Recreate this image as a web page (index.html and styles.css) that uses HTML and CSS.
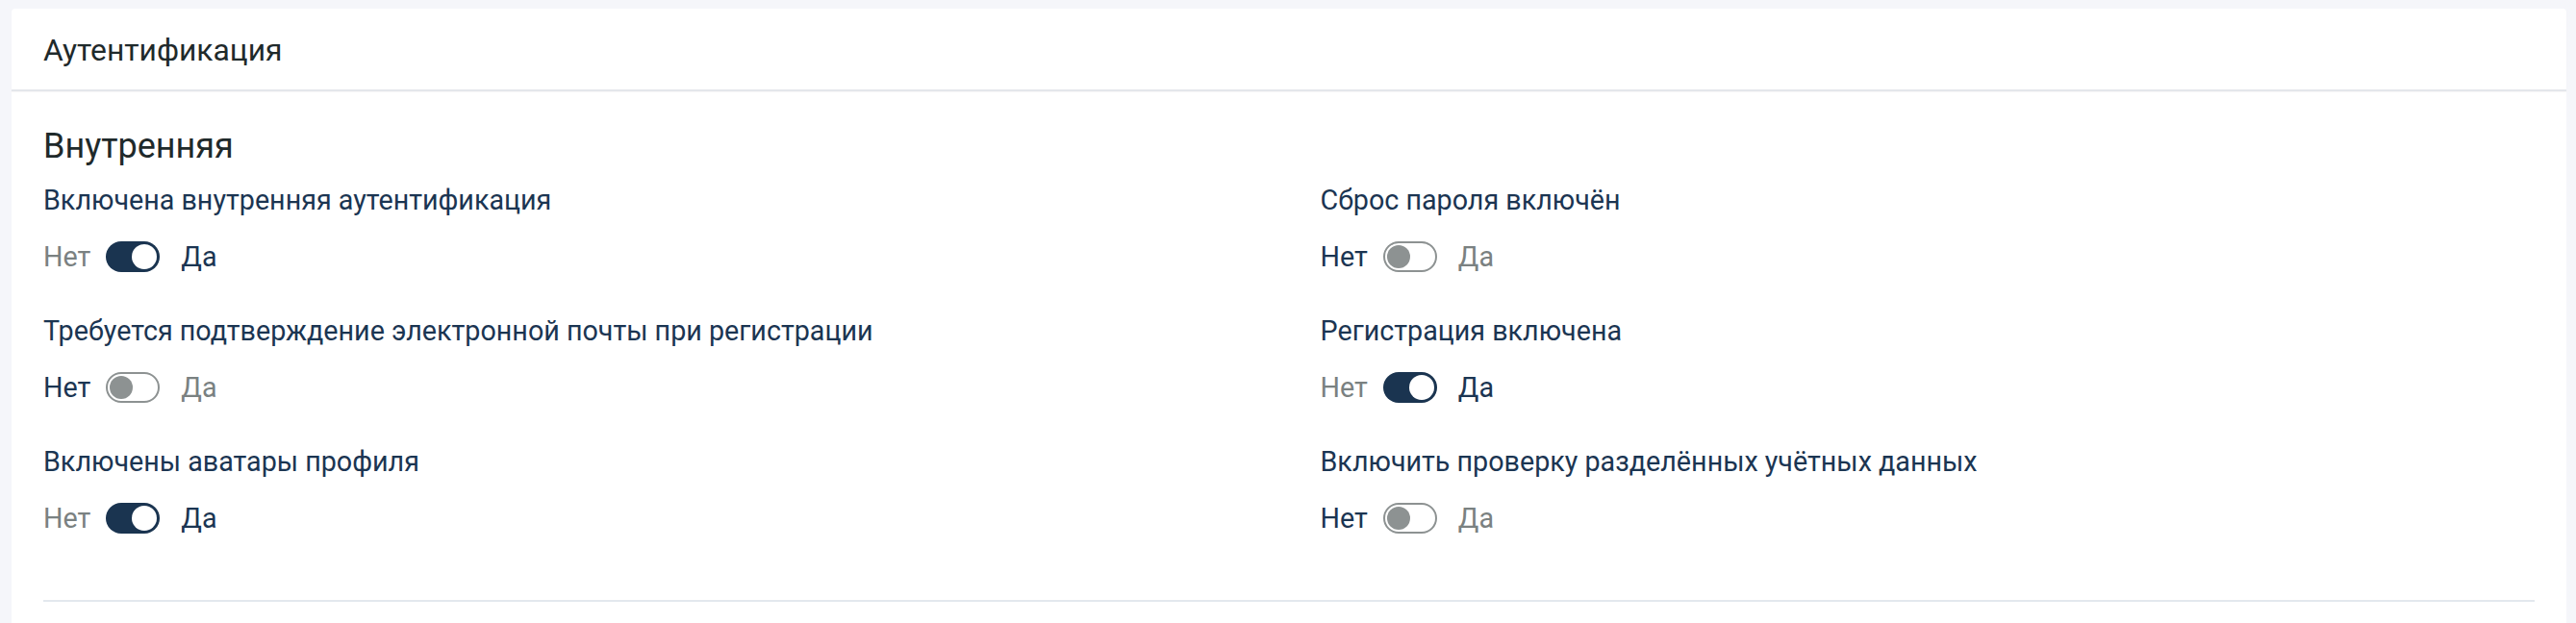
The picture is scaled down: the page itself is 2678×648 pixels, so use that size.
FILE: index.html
```html
<!DOCTYPE html>
<html lang="ru">
<head>
<meta charset="utf-8">
<title>Аутентификация</title>
<link rel="stylesheet" href="styles.css">
</head>
<body>
<div class="page">
  <section class="card">
    <header class="card-header">Аутентификация</header>
    <div class="card-body">
      <h2 class="section-title">Внутренняя</h2>
      <div class="grid">
        <div class="field">
          <div class="field-label">Включена внутренняя аутентификация</div>
          <div class="switch-row on">
            <span class="opt no">Нет</span><span class="switch"><span class="knob"></span></span><span class="opt yes">Да</span>
          </div>
        </div>
        <div class="field">
          <div class="field-label">Сброс пароля включён</div>
          <div class="switch-row off">
            <span class="opt no">Нет</span><span class="switch"><span class="knob"></span></span><span class="opt yes">Да</span>
          </div>
        </div>
        <div class="field">
          <div class="field-label">Требуется подтверждение электронной почты при регистрации</div>
          <div class="switch-row off">
            <span class="opt no">Нет</span><span class="switch"><span class="knob"></span></span><span class="opt yes">Да</span>
          </div>
        </div>
        <div class="field">
          <div class="field-label">Регистрация включена</div>
          <div class="switch-row on">
            <span class="opt no">Нет</span><span class="switch"><span class="knob"></span></span><span class="opt yes">Да</span>
          </div>
        </div>
        <div class="field">
          <div class="field-label">Включены аватары профиля</div>
          <div class="switch-row on">
            <span class="opt no">Нет</span><span class="switch"><span class="knob"></span></span><span class="opt yes">Да</span>
          </div>
        </div>
        <div class="field">
          <div class="field-label">Включить проверку разделённых учётных данных</div>
          <div class="switch-row off">
            <span class="opt no">Нет</span><span class="switch"><span class="knob"></span></span><span class="opt yes">Да</span>
          </div>
        </div>
      </div>
      <div class="divider"></div>
    </div>
  </section>
</div>
</body>
</html>
```

FILE: styles.css
```css
* { box-sizing: border-box; }

html, body {
  margin: 0;
  height: 100%;
}

body {
  background: #f5f6fa;
  font-family: Roboto, "Noto Sans", "Liberation Sans", sans-serif;
  overflow: hidden;
}

.page {
  padding: 9px 10px 0 12px;
}

.card {
  background: #ffffff;
  border-radius: 4px 4px 0 0;
  min-height: 700px;
}

.card-header {
  height: 86px;
  display: flex;
  align-items: center;
  padding: 1px 33px 0 33px;
  font-size: 31.8px;
  color: #1f2a2b;
  border-bottom: 2px solid #e4e6eb;
  box-shadow: 0 1px 1px rgba(0, 0, 0, 0.03);
}

.card-body {
  padding: 37px 33px 0 33px;
}

.section-title {
  margin: 0;
  font-weight: 400;
  font-size: 36px;
  line-height: 40px;
  color: #1f2a2b;
}

.grid {
  margin-top: 18px;
  display: grid;
  grid-template-columns: 1fr 1fr;
  column-gap: 65px;
  row-gap: 43px;
}

.field-label {
  font-size: 28.7px;
  line-height: 36px;
  color: #1b3552;
}

.switch-row {
  margin-top: 25px;
  display: flex;
  align-items: center;
  height: 32px;
  font-size: 28.7px;
  line-height: 32px;
}

.opt { color: #7a8181; }
.switch-row.on .yes { color: #1b3552; }
.switch-row.off .no { color: #1b3552; }

.switch {
  position: relative;
  width: 56px;
  height: 32px;
  border-radius: 16px;
  margin: 0 22px 0 16px;
  flex: none;
}

.switch-row.on .switch {
  background: #1a3450;
}

.switch-row.off .switch {
  background: #ffffff;
  border: 2px solid #8d9292;
}

.knob {
  position: absolute;
  top: 3px;
  width: 26px;
  height: 26px;
  border-radius: 50%;
}

.switch-row.on .knob {
  right: 3px;
  background: #ffffff;
}

.switch-row.off .knob {
  top: 2px;
  left: 2px;
  width: 24px;
  height: 24px;
  background: #8d9292;
}

.divider {
  margin-top: 69px;
  height: 2px;
  background: #e3e8ee;
}
```
